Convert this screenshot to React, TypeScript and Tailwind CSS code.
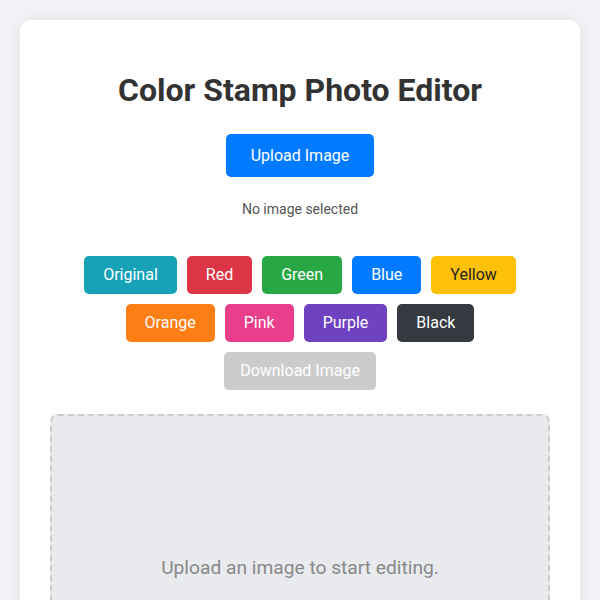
const stamps = [
  { label: 'Original', cls: 'bg-[#17a2b8] text-white' },
  { label: 'Red', cls: 'bg-[#dc3545] text-white' },
  { label: 'Green', cls: 'bg-[#28a745] text-white' },
  { label: 'Blue', cls: 'bg-[#007bff] text-white' },
  { label: 'Yellow', cls: 'bg-[#ffc107] text-[#212529]' },
  { label: 'Orange', cls: 'bg-[#fd7e14] text-white' },
  { label: 'Pink', cls: 'bg-[#e83e8c] text-white' },
  { label: 'Purple', cls: 'bg-[#6f42c1] text-white' },
  { label: 'Black', cls: 'bg-[#343a40] text-white' },
];

export default function App() {
  return (
    <div className="min-h-screen bg-[#f0f2f5] px-5 pt-5 font-['Roboto',sans-serif]">
      <div className="rounded-[10px] bg-white px-[30px] pb-[30px] pt-[51px] shadow-[0_0_12px_rgba(0,0,0,0.08)]">
        <h1 className="text-center text-[32px] font-bold leading-[38px] text-[#333]">
          Color Stamp Photo Editor
        </h1>
        <div className="mt-[25px] flex justify-center">
          <button className="h-[43px] rounded-[5px] bg-[#007bff] px-[25px] text-[16px] text-white">
            Upload Image
          </button>
        </div>
        <p className="mt-[23px] text-center text-[14px] leading-[18px] text-[#555]">No image selected</p>
        <div className="mx-auto mt-[38px] flex max-w-[440px] flex-wrap justify-center gap-[10px]">
          {stamps.map((s) => (
            <button
              key={s.label}
              className={`h-[38px] rounded-[5px] px-[19px] text-[16px] ${s.cls}`}
            >
              {s.label}
            </button>
          ))}
          <button className="h-[38px] rounded-[5px] bg-[#cccccc] px-[16px] text-[16px] text-white" disabled>
            Download Image
          </button>
        </div>
        <div className="mt-[24px] flex h-[308px] items-center justify-center rounded-[8px] border-2 border-dashed border-[#ccc] bg-[#e9eaee]">
          <p className="text-[19.2px] text-[#888]">Upload an image to start editing.</p>
        </div>
      </div>
    </div>
  );
}
